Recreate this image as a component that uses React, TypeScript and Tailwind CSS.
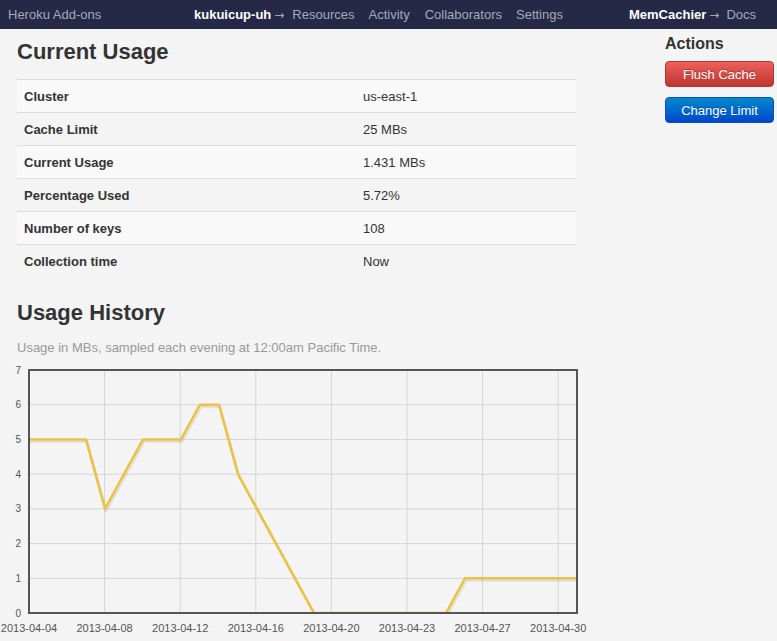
const rows = [
  { label: "Cluster", value: "us-east-1" },
  { label: "Cache Limit", value: "25 MBs" },
  { label: "Current Usage", value: "1.431 MBs" },
  { label: "Percentage Used", value: "5.72%" },
  { label: "Number of keys", value: "108" },
  { label: "Collection time", value: "Now" },
];

// chart geometry (svg is placed at page y=360, x=0)
const X0 = 29;
const X1 = 577;
const Y_TOP = 10;
const Y_BOT = 253;
const UNIT = (Y_BOT - Y_TOP) / 7;
const TICK = 75.6;

const dates = [
  "2013-04-04",
  "2013-04-08",
  "2013-04-12",
  "2013-04-16",
  "2013-04-20",
  "2013-04-23",
  "2013-04-27",
  "2013-04-30",
];

const points: [number, number][] = [
  [29, 5],
  [86, 5],
  [105, 3],
  [143, 5],
  [181, 5],
  [200, 6],
  [219, 6],
  [238, 4],
  [257, 3],
  [314, 0],
  [446, 0],
  [465, 1],
  [577, 1],
];

const yOf = (v: number) => Y_BOT - v * UNIT;

function UsageChart() {
  const line = points.map(([x, v]) => `${x},${yOf(v)}`).join(" ");
  const shadow = points.map(([x, v]) => `${x + 1},${yOf(v) + 2}`).join(" ");
  return (
    <svg width="600" height="281" className="block -ml-[17px]">
      <defs>
        <clipPath id="plot">
          <rect x={X0} y={Y_TOP} width={X1 - X0} height={Y_BOT - Y_TOP} />
        </clipPath>
      </defs>
      {/* grid */}
      {[1, 2, 3, 4, 5, 6].map((v) => (
        <line key={v} x1={X0} x2={X1} y1={yOf(v)} y2={yOf(v)} stroke="#d6d6d6" strokeWidth="1" />
      ))}
      {dates.map((_, i) =>
        i === 0 ? null : (
          <line
            key={i}
            x1={X0 + i * TICK}
            x2={X0 + i * TICK}
            y1={Y_TOP}
            y2={Y_BOT}
            stroke="#d6d6d6"
            strokeWidth="1"
          />
        )
      )}
      {/* series */}
      <g clipPath="url(#plot)">
        <polyline points={shadow} fill="none" stroke="rgba(0,0,0,0.08)" strokeWidth="3" strokeLinejoin="round" />
        <polyline points={line} fill="none" stroke="#edc240" strokeWidth="2.5" strokeLinejoin="round" />
      </g>
      {/* border */}
      <rect x={X0} y={Y_TOP} width={X1 - X0} height={Y_BOT - Y_TOP} fill="none" stroke="#555" strokeWidth="2" />
      {/* y labels */}
      {[0, 1, 2, 3, 4, 5, 6, 7].map((v) => (
        <text key={v} x="21" y={yOf(v) + 3.5} textAnchor="end" fontSize="10" fill="#545454">
          {v}
        </text>
      ))}
      {/* x labels */}
      {dates.map((d, i) => (
        <text key={d} x={X0 + i * TICK} y="272" textAnchor="middle" fontSize="11" fill="#545454">
          {d}
        </text>
      ))}
    </svg>
  );
}

function Arrow() {
  return <span className="ml-[3px] font-['DejaVu_Sans',sans-serif] text-[12px]">→</span>;
}

export default function App() {
  return (
    <div className="w-[777px] h-[641px] overflow-hidden bg-[#f4f4f4] text-[#333] font-['Liberation_Sans',Arial,sans-serif]">
      {/* Top nav */}
      <nav className="h-[29px] bg-[#252946] flex items-center text-[13px] text-[#a3a9bb] pl-[8px] pr-[21px] whitespace-nowrap">
        <span className="w-[186px]">Heroku Add-ons</span>
        <div className="flex items-center">
          <span className="font-bold text-white">kukuicup-uh</span>
          <Arrow />
          <span className="ml-[8px]">Resources</span>
          <span className="ml-[14px]">Activity</span>
          <span className="ml-[15px]">Collaborators</span>
          <span className="ml-[14px]">Settings</span>
        </div>
        <div className="ml-auto flex items-center">
          <span className="font-bold text-white">MemCachier</span>
          <Arrow />
          <span className="ml-[7px]">Docs</span>
        </div>
      </nav>

      <div className="flex">
        {/* Main column */}
        <div className="w-[559px] ml-[17px]">
          <h2 className="mt-[10px] text-[22px] leading-[26px] font-bold">Current Usage</h2>
          <div className="mt-[14px] text-[13px]">
            {rows.map((r, i) => (
              <div
                key={r.label}
                className={`flex items-center h-[33px] pt-[2px] border-t border-[#dddddd] ${
                  i % 2 === 0 ? "bg-[#f9f9f9]" : ""
                }`}
              >
                <div className="w-[338px] pl-[7px] font-bold">{r.label}</div>
                <div className="pl-[8px]">{r.value}</div>
              </div>
            ))}
          </div>

          <h2 className="mt-[23px] text-[22px] leading-[26px] font-bold">Usage History</h2>
          <p className="mt-[13px] text-[13px] leading-[18px] text-[#999]">
            Usage in MBs, sampled each evening at 12:00am Pacific Time.
          </p>
          <div className="mt-[3px]">
            <UsageChart />
          </div>
        </div>

        {/* Sidebar */}
        <div className="ml-auto mr-[3px] w-[109px]">
          <h3 className="mt-[5px] text-[16px] leading-[20px] font-bold">Actions</h3>
          <button className="mt-[7px] w-full h-[26px] pt-[1px] rounded-[4px] text-[13px] text-white border border-[#b33a33] bg-gradient-to-b from-[#ee5f5b] to-[#bd362f] [text-shadow:0_-1px_0_rgba(0,0,0,0.25)]">
            Flush Cache
          </button>
          <button className="mt-[10px] w-full h-[26px] pt-[1px] rounded-[4px] text-[13px] text-white border border-[#0a4fbf] bg-gradient-to-b from-[#0088cc] to-[#0044cc] [text-shadow:0_-1px_0_rgba(0,0,0,0.25)]">
            Change Limit
          </button>
        </div>
      </div>
    </div>
  );
}
